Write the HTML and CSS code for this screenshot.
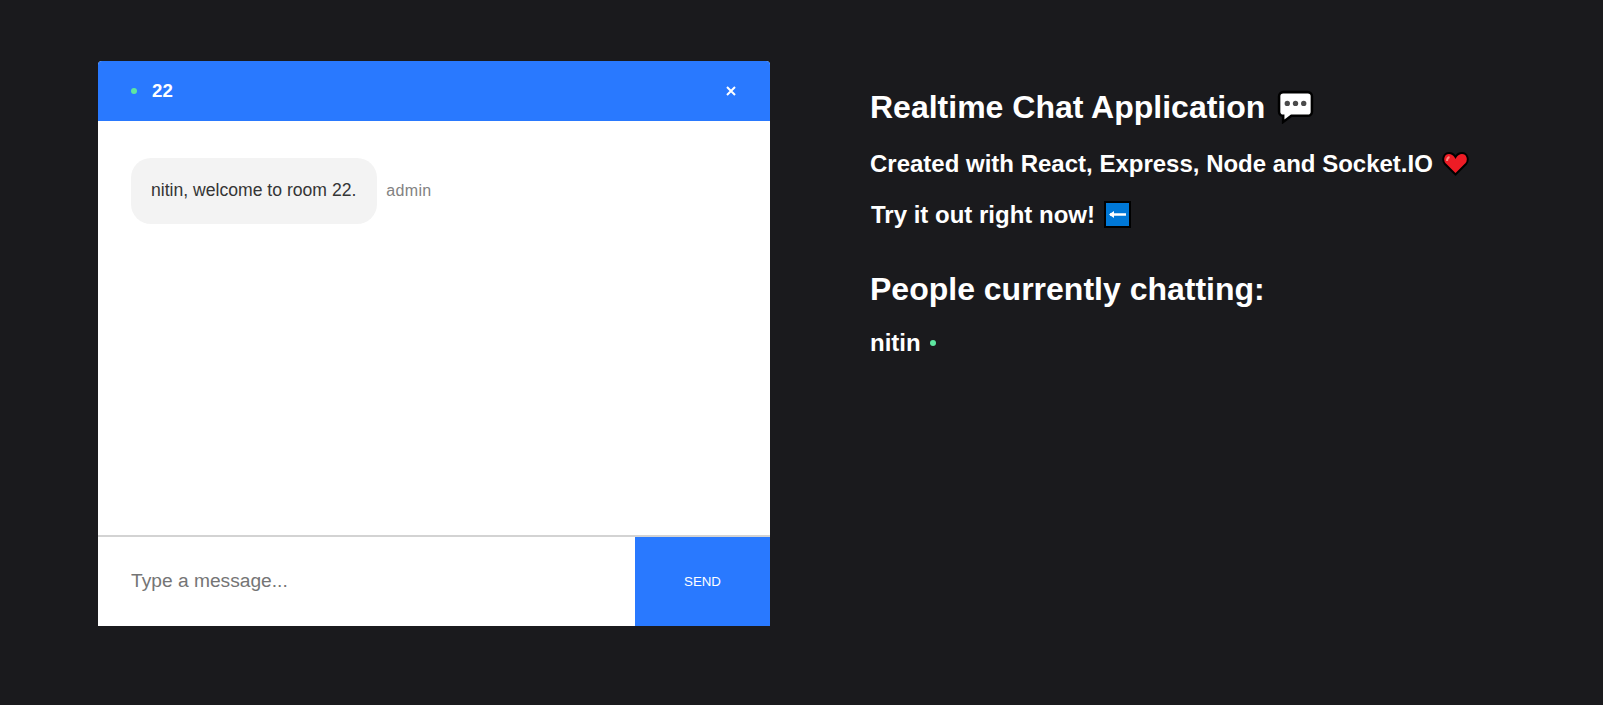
FILE: index.html
```html
<!DOCTYPE html>
<html lang="en">
<head>
<meta charset="utf-8">
<title>Realtime Chat Application</title>
<link rel="stylesheet" href="styles.css">
</head>
<body>
<div class="outer">
  <section class="chat">
    <header class="bar">
      <div class="bar-left">
        <span class="dot"></span>
        <h3 class="room">22</h3>
      </div>
      <svg class="close" width="10" height="10" viewBox="0 0 10 10"><path d="M1 1l8 8M9 1l-8 8" stroke="#fff" stroke-width="2"/></svg>
    </header>
    <div class="messages">
      <div class="message">
        <div class="bubble">nitin, welcome to room 22.</div>
        <span class="sender">admin</span>
      </div>
    </div>
    <form class="composer">
      <input class="input" type="text" placeholder="Type a message...">
      <button class="send" type="button">SEND</button>
    </form>
  </section>
  <aside class="info">
    <h1 class="title">Realtime Chat Application
      <svg class="emoji e-chat" width="37" height="34" viewBox="0 0 36 33"><path d="M6 2h24a4 4 0 0 1 4 4v15a4 4 0 0 1-4 4H14l-8 6v-6a4 4 0 0 1-4-4V6a4 4 0 0 1 4-4z" fill="#fff" stroke="#000" stroke-width="2.500"/><circle cx="10" cy="13" r="2.600" fill="#4a4a4a"/><circle cx="18" cy="13" r="2.600" fill="#4a4a4a"/><circle cx="26" cy="13" r="2.600" fill="#4a4a4a"/></svg>
    </h1>
    <h2 class="sub">Created with React, Express, Node and Socket.IO
      <svg class="emoji e-heart" width="27" height="25" viewBox="0 0 27 25"><path d="M13.500 23.500L3 13C-.5 9 1.500 2 7 2c3 0 5 1.500 6.500 4C15 3.500 17 2 20 2c5.500 0 7.500 7 4 11z" fill="#ee1c25" stroke="#000" stroke-width="2"/><path d="M5 10c0-2 1-3.500 2.500-4" stroke="#f98a80" stroke-width="2" fill="none"/></svg>
    </h2>
    <h2 class="sub try">Try it out right now!
      <svg class="emoji e-arrow" width="27" height="27" viewBox="0 0 27 27"><rect x="1" y="1" width="25" height="25" fill="#0078d7" stroke="#000" stroke-width="2"/><path d="M6 13.500h16" stroke="#fff" stroke-width="2.500"/><path d="M5 13.500l5-3.500v7z" fill="#fff"/></svg>
    </h2>
    <h1 class="title people">People currently chatting:</h1>
    <h2 class="sub person">nitin <span class="dot"></span></h2>
  </aside>
</div>
</body>
</html>
```
FILE: styles.css
```css
html, body {
  margin: 0;
  height: 100%;
  background: #1a1a1d;
  font-family: "Liberation Sans", Arial, sans-serif;
}
.outer {
  display: flex;
  align-items: flex-start;
  padding: 61px 0 0 98px;
  box-sizing: border-box;
  height: 705px;
}
.chat {
  width: 672px;
  height: 565px;
  display: flex;
  flex-direction: column;
  background: #fff;
  border-radius: 4px 4px 0 0;
  overflow: hidden;
}
.bar {
  height: 60px;
  flex: none;
  display: flex;
  align-items: center;
  justify-content: space-between;
  background: #2979ff;
  padding: 0 34px 0 33px;
  color: #fff;
}
.bar-left {
  display: flex;
  align-items: center;
  gap: 15px;
}
.dot {
  display: inline-block;
  width: 6px;
  height: 6px;
  border-radius: 50%;
  background: #5ee6a0;
}
.room {
  margin: 0;
  font-size: 18.7px;
  font-weight: 700;
}
.close {
  display: block;
}
.messages {
  flex: 1;
  padding: 37px 33px 0;
}
.message {
  display: flex;
  align-items: center;
  gap: 9px;
}
.bubble {
  background: #f3f3f3;
  color: #353535;
  border-radius: 20px;
  padding: 0 21px 0 20px;
  height: 66px;
  line-height: 64px;
  font-size: 17.6px;
}
.sender {
  color: #828282;
  font-size: 16px;
  letter-spacing: .3px;
}
.composer {
  flex: none;
  display: flex;
  height: 89px;
  margin: 0;
  border-top: 2px solid #d3d3d3;
}
.input {
  flex: 1;
  min-width: 0;
  border: 0;
  outline: 0;
  padding: 0 33px 2px;
  font-family: inherit;
  font-size: 19.2px;
  background: #fff;
}
.input::placeholder {
  color: #757575;
}
.send {
  flex: none;
  width: 135px;
  border: 0;
  padding: 0 0 1px;
  background: #2979ff;
  color: #fff;
  font-family: inherit;
  font-size: 13.3px;
  text-transform: uppercase;
}
.info {
  margin-left: 100px;
  color: #fff;
}
.title {
  margin: 28px 0 0;
  font-size: 32px;
  line-height: 37px;
  font-weight: 700;
}
.sub {
  margin: 24px 0 0;
  font-size: 24px;
  line-height: 28px;
  font-weight: 700;
}
.try {
  margin-top: 23px;
  padding-left: 1px;
}
.people {
  margin-top: 42px;
}
.person {
  margin-top: 21px;
}
.person .dot {
  vertical-align: 5px;
  margin-left: 3px;
}
.emoji {
  vertical-align: -5px;
}
.e-chat { margin-left: 3px; vertical-align: -6px; }
.e-heart { margin-left: 2px; vertical-align: -4px; }
.e-arrow { margin-left: 2px; vertical-align: -5px; }
```
